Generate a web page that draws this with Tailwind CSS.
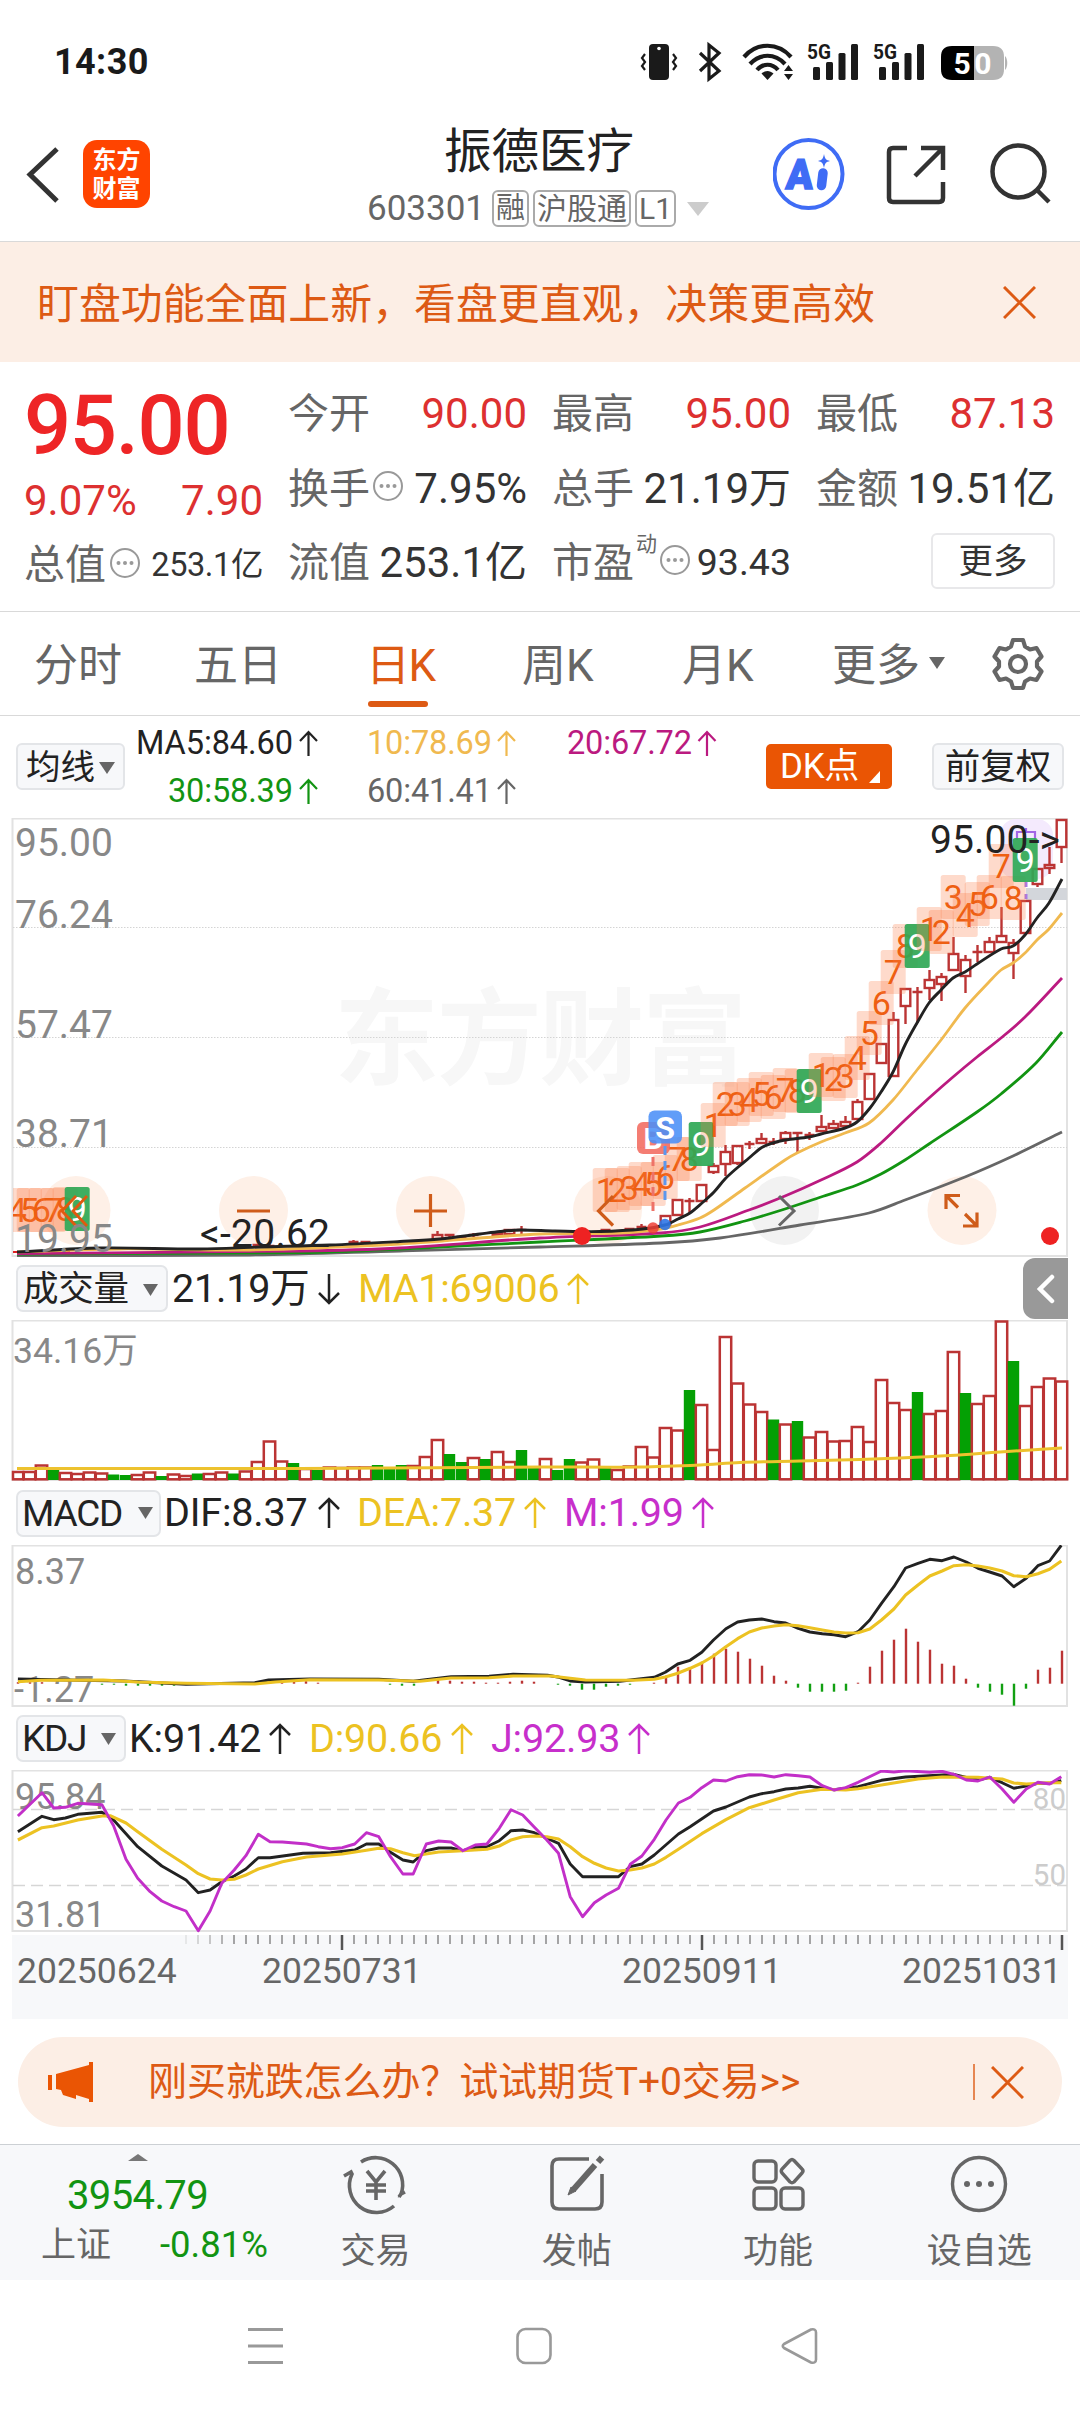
<!DOCTYPE html>
<html lang="zh-CN">
<head>
<meta charset="utf-8">
<title>振德医疗 603301</title>
<script src="https://cdn.jsdelivr.net/npm/@tailwindcss/browser@4"></script>
</head>
<body class="bg-white">
<div class="flex h-[2412px] w-[1080px] flex-col overflow-hidden bg-white font-['Roboto','Noto_Sans_CJK_SC',sans-serif] leading-none whitespace-nowrap text-[#222]">

  <!-- status bar -->
  <div class="flex h-[122px] items-center justify-between pr-[60px] pl-[54px]">
    <span class="pt-[2px] text-[36px] font-bold tracking-[0.4px] text-[#1a1a1a]">14:30</span>
    <svg class="h-[50px] w-[390px]" viewBox="630 36 390 50" fill="none" stroke="#1a1a1a">
      <rect x="649" y="44" width="20" height="36" rx="4" fill="#1a1a1a" stroke="none"/><circle cx="659" cy="48.500" r="1.800" fill="#fff" stroke="none"/>
      <path d="M645 54l-3 4 3 4-3 4 3 4M673 54l3 4-3 4 3 4-3 4" stroke-width="2.200"/>
      <path d="M700 53l19 18-10 8V45l10 8-19 18" stroke-width="3.200"/>
      <path d="M744 57c13-15 34-15 47 0M750 64c10-11 25-11 35 0M757 70c6-7 15-7 21 0" stroke-width="4.200"/>
      <path d="M767.500 80l-6-6.500c4-3.500 8-3.500 12 0z" fill="#1a1a1a" stroke="none"/>
      <path d="M784 71l4.500-6 4.500 6zM784 74l4.500 6 4.500-6z" fill="#1a1a1a" stroke="none"/>
      <g fill="#1a1a1a" stroke="none">
        <rect x="813" y="67" width="7" height="13" rx="1.500"/><rect x="826" y="62" width="7" height="18" rx="1.500"/><rect x="838.500" y="53" width="7" height="27" rx="1.500"/><rect x="851" y="44" width="7" height="36" rx="1.500"/>
        <rect x="879" y="67" width="7" height="13" rx="1.500"/><rect x="892" y="62" width="7" height="18" rx="1.500"/><rect x="904.500" y="53" width="7" height="27" rx="1.500"/><rect x="917" y="44" width="7" height="36" rx="1.500"/>
        <text x="807" y="58.500" font-size="20.500" font-weight="700" textLength="24" lengthAdjust="spacingAndGlyphs">5G</text>
        <text x="873" y="58.500" font-size="20.500" font-weight="700" textLength="24" lengthAdjust="spacingAndGlyphs">5G</text>
        <path d="M1005 56c3 3 3 11 0 14z" fill="#b3b3b3"/>
        <path d="M974 46h19c8 0 11 4 11 11v12c0 7-3 11-11 11h-19z" fill="#b3b3b3"/>
        <path d="M974 46h-22c-8 0-11 4-11 11v12c0 7 3 11 11 11h22z" fill="#000"/>
        <text x="953.500" y="74" font-size="30" font-weight="700" fill="#fff" textLength="38">50</text>
      </g>
    </svg>
  </div>

  <!-- header -->
  <div class="grid h-[120px] grid-cols-[367px_1fr_307px] border-b border-[#d9d9d9]">
    <div class="flex gap-[24px] pt-[18px] pl-[26px]">
      <svg class="mt-[7px] h-[56px] w-[33px]" viewBox="0 0 33 56" fill="none" stroke="#333" stroke-width="5"><path d="M31 2L4 27.500 31 54"/></svg>
      <div class="flex h-[68px] w-[67px] flex-col items-center justify-center gap-[5px] rounded-[14px] bg-[#ff4400] text-[24px] font-bold text-white"><span>东方</span><span>财富</span></div>
    </div>
    <div class="flex flex-col">
      <div class="flex h-[62px] items-center pl-[77px] text-[47.5px]">振德医疗</div>
      <div class="mt-[6px] flex h-[37px] items-center text-[#666]">
        <span class="w-[125px] text-[35px]">603301</span>
        <span class="mr-[4px] flex h-[37px] w-[37px] items-center justify-center rounded-[6px] border-2 border-[#aaa] text-[29px]">融</span>
        <span class="mr-[4px] flex h-[37px] w-[98px] items-center justify-center rounded-[6px] border-2 border-[#aaa] text-[30px]">沪股通</span>
        <span class="flex h-[37px] w-[41px] items-center justify-center rounded-[6px] border-2 border-[#aaa] text-[30px]">L1</span>
        <svg class="ml-[11px] h-[14px] w-[22px]" viewBox="0 0 22 14"><path d="M0 0h22L11 14z" fill="#ccc"/></svg>
      </div>
    </div>
    <svg class="h-[119px] w-[307px]" viewBox="773 122 307 119" fill="none" stroke="#333" stroke-width="4.500">
      <circle cx="808.500" cy="174" r="34" stroke="#3f6cf5" stroke-width="4"/>
      <text x="785.500" y="189" font-size="42" font-weight="900" fill="#3f6cf5" stroke="#3f6cf5" stroke-width="1.500" textLength="27" lengthAdjust="spacingAndGlyphs" transform="skewX(-4) translate(13 0)">A</text>
      <path d="M823 173l-1.500 12.500" stroke="#3f6cf5" stroke-width="9.500" stroke-linecap="round"/>
      <path d="M824 154c1 5 2 6 6 7-4 1-5 2-6 7-1-5-2-6-6-7 4-1 5-2 6-7z" fill="#3f6cf5" stroke="none"/>
      <path d="M907 148h-14q-4 0-4 4v46q0 4 4 4h46q4 0 4-4v-16M921 148h22v22M943 148l-28 28"/>
      <circle cx="1018.500" cy="171.500" r="26"/><path d="M1036 189l13 13"/>
    </svg>
  </div>

  <!-- notice -->
  <div class="flex h-[120px] items-center justify-between bg-[#fceee5] pr-[44px] pl-[37px] text-[#dd5a14]">
    <span class="pt-[5px] text-[41.9px]">盯盘功能全面上新，看盘更直观，决策更高效</span>
    <svg class="h-[33px] w-[33px]" viewBox="0 0 33 33" stroke="#dd5a14" stroke-width="3"><path d="M1 1l31 31M32 1L1 32"/></svg>
  </div>

  <!-- quote -->
  <div class="grid h-[250px] grid-cols-[239px_239px_239px_239px] gap-x-[25px] border-b border-[#d9d9d9] pl-[24px] text-[42px] text-[#333]">
    <div class="flex flex-col text-[#ee2526]">
      <div class="mt-[22px] flex h-[82px] items-center text-[83px] font-medium tracking-[-1.3px]">95.00</div>
      <div class="mt-[14px] flex h-[42px] items-center justify-between text-[42px] text-[#dd3030]"><span>9.07%</span><span>7.90</span></div>
      <div class="mt-[22px] flex h-[42px] items-center text-[#333]"><span class="text-[41px] text-[#666]">总值</span>
        <svg class="mx-[3px] mb-[5px] h-[32px] w-[32px]" viewBox="0 0 32 32"><circle cx="16" cy="16" r="14" fill="none" stroke="#999" stroke-width="2"/><g fill="#999"><circle cx="9.500" cy="16" r="2"/><circle cx="16" cy="16" r="2"/><circle cx="22.500" cy="16" r="2"/></g></svg>
        <span class="ml-auto text-[32.5px] tracking-[-0.4px]">253.1亿</span></div>
    </div>
    <div class="flex flex-col pt-[31px]">
      <div class="flex h-[42px] items-center justify-between"><span class="text-[41px] text-[#666]">今开</span><span class="text-[#dd3030]">90.00</span></div>
      <div class="mt-[33px] flex h-[42px] items-center"><span class="text-[41px] text-[#666]">换手</span>
        <svg class="mx-[2px] mb-[6px] h-[32px] w-[32px]" viewBox="0 0 32 32"><circle cx="16" cy="16" r="14" fill="none" stroke="#999" stroke-width="2"/><g fill="#999"><circle cx="9.500" cy="16" r="2"/><circle cx="16" cy="16" r="2"/><circle cx="22.500" cy="16" r="2"/></g></svg>
        <span class="ml-auto">7.95%</span></div>
      <div class="mt-[32px] flex h-[42px] items-center justify-between"><span class="text-[41px] text-[#666]">流值</span><span>253.1亿</span></div>
    </div>
    <div class="flex flex-col pt-[31px]">
      <div class="flex h-[42px] items-center justify-between"><span class="text-[41px] text-[#666]">最高</span><span class="text-[#dd3030]">95.00</span></div>
      <div class="mt-[33px] flex h-[42px] items-center justify-between"><span class="text-[41px] text-[#666]">总手</span><span>21.19万</span></div>
      <div class="mt-[32px] flex h-[42px] items-center"><span class="text-[41px] text-[#666]">市盈</span><span class="mb-[38px] ml-[2px] text-[21px] text-[#666]">动</span>
        <svg class="mb-[6px] ml-[2px] h-[32px] w-[32px]" viewBox="0 0 32 32"><circle cx="16" cy="16" r="14" fill="none" stroke="#999" stroke-width="2"/><g fill="#999"><circle cx="9.500" cy="16" r="2"/><circle cx="16" cy="16" r="2"/><circle cx="22.500" cy="16" r="2"/></g></svg>
        <span class="ml-auto text-[37.5px]">93.43</span></div>
    </div>
    <div class="flex flex-col pt-[31px]">
      <div class="flex h-[42px] items-center justify-between"><span class="text-[41px] text-[#666]">最低</span><span class="text-[#dd3030]">87.13</span></div>
      <div class="mt-[33px] flex h-[42px] items-center justify-between"><span class="text-[41px] text-[#666]">金额</span><span>19.51亿</span></div>
      <div class="mt-[23px] ml-auto flex h-[56px] w-[124px] items-center justify-center rounded-[6px] border-2 border-[#e8e8ea] text-[34.5px]">更多</div>
    </div>
  </div>

  <!-- period tabs -->
  <div class="flex h-[104px] items-start border-b border-[#d9d9d9] pt-[32px] text-[44px] text-[#666]">
    <span class="w-[158px] pl-[34px]">分时</span>
    <span class="w-[156px] pl-[36px]">五日</span>
    <span class="flex w-[156px] flex-col pl-[52px] tracking-[-1.5px] text-[#dd5a14]">日K<i class="mt-[13px] ml-[2px] h-[6px] w-[60px] rounded-full bg-[#dd5a14]"></i></span>
    <span class="w-[156px] pl-[52px]">周K</span>
    <span class="w-[156px] pl-[56px]">月K</span>
    <span class="w-[147px] pl-[50px]">更多</span>
    <svg class="mt-[13px] h-[12px] w-[16px]" viewBox="0 0 16 12"><path d="M0 0h16L8 12z" fill="#666"/></svg>
    <svg class="-mt-[7px] ml-[46px] h-[54px] w-[54px]" viewBox="-27 -27 54 54" fill="none" stroke="#666" stroke-width="4.200" stroke-linejoin="round"><path d="M-5-24H5L7-17.500 12-14.500 18.500-16 23.500-7.500 19-2.500V2.500L23.500 7.500 18.500 16 12 14.500 7 17.500 5 24H-5L-7 17.500-12 14.500-18.500 16-23.500 7.500-19 2.500V-2.500L-23.500-7.500-18.500-16-12-14.500-7-17.500z"/><circle r="8"/></svg>
  </div>

  <!-- moving averages -->
  <div class="flex h-[102px] items-start pt-[27px] pl-[16px]">
    <div class="flex h-[47px] w-[109px] items-center gap-[4px] rounded-[6px] border-2 border-[#e3e5e8] bg-[#f7f8fa] pt-[2px] pl-[8px] text-[34.5px]">均线<svg class="h-[12px] w-[16px]" viewBox="0 0 16 12"><path d="M0 0h16L8 12z" fill="#666"/></svg></div>
    <svg class="-mt-[27px] h-[102px] w-[641px]" viewBox="125 716 641 102" font-size="32.500">
      <g fill="#222" stroke="#222"><text x="136" y="754" stroke="none" textLength="157">MA5:84.60</text><path d="M308.500 756v-24M300 741l8.500-9 8.500 9" fill="none" stroke-width="2.200"/></g>
      <g fill="#f0b94f" stroke="#f0b94f"><text x="367" y="754" stroke="none" textLength="125">10:78.69</text><path d="M506.500 756v-24M498 741l8.500-9 8.500 9" fill="none" stroke-width="2.200"/></g>
      <g fill="#bb1a80" stroke="#bb1a80"><text x="567" y="754" stroke="none" textLength="125">20:67.72</text><path d="M707 756v-24M698.500 741l8.500-9 8.500 9" fill="none" stroke-width="2.200"/></g>
      <g fill="#129412" stroke="#129412"><text x="168" y="802" stroke="none" textLength="125">30:58.39</text><path d="M308.500 804v-24M300 789l8.500-9 8.500 9" fill="none" stroke-width="2.200"/></g>
      <g fill="#666" stroke="#666"><text x="367" y="802" stroke="none" textLength="125">60:41.41</text><path d="M506.500 804v-24M498 789l8.500-9 8.500 9" fill="none" stroke-width="2.200"/></g>
    </svg>
    <div class="mt-px flex h-[45px] w-[126px] items-center rounded-[5px] bg-[#ea5504] pl-[14px] text-[35px] tracking-[-0.3px] text-white">DK点<svg class="mt-[20px] ml-[10px] h-[12px] w-[11px]" viewBox="0 0 11 12"><path d="M11 0v12H0z" fill="#fff"/></svg></div>
    <div class="ml-[40px] flex h-[47px] w-[132px] items-center justify-center rounded-[6px] border-2 border-[#e3e5e8] bg-[#f7f8fa] pt-[2px] text-[35.5px]">前复权</div>
  </div>

  <!-- price chart -->
  <svg id="price" class="h-[439px] w-[1080px] shrink-0" viewBox="0 818 1080 439" fill="none"></svg>

  <!-- volume -->
  <div class="flex h-[63px] items-center pl-[16px] text-[39.5px] tracking-[-0.2px]">
    <div class="flex h-[47px] w-[152px] items-center gap-[14px] rounded-[7px] border-2 border-[#e3e5e8] bg-[#f7f8fa] pt-[2px] pl-[5px] text-[35.5px]">成交量<svg class="h-[12px] w-[15px]" viewBox="0 0 15 12"><path d="M0 0h15L7.500 12z" fill="#666"/></svg></div>
    <span class="w-[150px] pl-[4px]">21.19万</span>
    <svg class="h-[32px] w-[22px]" viewBox="0 0 22 32" fill="none" stroke="#222" stroke-width="2.500"><path d="M11 1v29M1 20l10 10 10-10"/></svg>
    <span class="ml-[18px] w-[209px] text-[#ecc222]">MA1:69006</span>
    <svg class="h-[32px] w-[22px]" viewBox="0 0 22 32" fill="none" stroke="#ecc222" stroke-width="2.500"><path d="M11 31V2M1 12L11 2l10 10"/></svg>
    <div class="ml-auto mr-[12px] flex h-[61px] w-[45px] items-center justify-center rounded-l-[12px] bg-[#999]"><svg class="h-[30px] w-[18px]" viewBox="0 0 18 30" fill="none" stroke="#fff" stroke-width="4.500" stroke-linecap="round"><path d="M15 3L3 15l12 12"/></svg></div>
  </div>
  <svg id="volume" class="h-[161px] w-[1080px] shrink-0" viewBox="0 1320 1080 161" fill="none"></svg>

  <!-- MACD -->
  <div class="flex h-[64px] items-center pl-[16px] text-[39.5px] tracking-[-0.2px]">
    <div class="flex h-[47px] w-[145px] items-center gap-[16px] rounded-[7px] border-2 border-[#e3e5e8] bg-[#f7f8fa] pl-[4px] text-[37px] tracking-[-1.2px]">MACD<svg class="h-[12px] w-[15px]" viewBox="0 0 15 12"><path d="M0 0h15L7.500 12z" fill="#666"/></svg></div>
    <span class="w-[157px] pl-[3px]">DIF:8.37</span>
    <svg class="h-[32px] w-[22px]" viewBox="0 0 22 32" fill="none" stroke="#222" stroke-width="2.500"><path d="M11 31V2M1 12L11 2l10 10"/></svg>
    <span class="ml-[17px] w-[167px] text-[#ecc222]">DEA:7.37</span>
    <svg class="h-[32px] w-[22px]" viewBox="0 0 22 32" fill="none" stroke="#ecc222" stroke-width="2.500"><path d="M11 31V2M1 12L11 2l10 10"/></svg>
    <span class="ml-[18px] w-[128px] text-[#c72fcb]">M:1.99</span>
    <svg class="h-[32px] w-[22px]" viewBox="0 0 22 32" fill="none" stroke="#c72fcb" stroke-width="2.500"><path d="M11 31V2M1 12L11 2l10 10"/></svg>
  </div>
  <svg id="macd" class="h-[162px] w-[1080px] shrink-0" viewBox="0 1545 1080 162" fill="none"></svg>

  <!-- KDJ -->
  <div class="flex h-[63px] items-center pl-[16px] text-[39.5px] tracking-[-0.2px]">
    <div class="flex h-[47px] w-[110px] items-center gap-[15px] rounded-[7px] border-2 border-[#e3e5e8] bg-[#f7f8fa] pl-[4px] text-[37px] tracking-[-1.2px]">KDJ<svg class="h-[12px] w-[15px]" viewBox="0 0 15 12"><path d="M0 0h15L7.500 12z" fill="#666"/></svg></div>
    <span class="w-[143px] pl-[3px]">K:91.42</span>
    <svg class="h-[32px] w-[22px]" viewBox="0 0 22 32" fill="none" stroke="#222" stroke-width="2.500"><path d="M11 31V2M1 12L11 2l10 10"/></svg>
    <span class="ml-[18px] w-[142px] text-[#ecc222]">D:90.66</span>
    <svg class="h-[32px] w-[22px]" viewBox="0 0 22 32" fill="none" stroke="#ecc222" stroke-width="2.500"><path d="M11 31V2M1 12L11 2l10 10"/></svg>
    <span class="ml-[18px] w-[137px] text-[#c72fcb]">J:92.93</span>
    <svg class="h-[32px] w-[22px]" viewBox="0 0 22 32" fill="none" stroke="#c72fcb" stroke-width="2.500"><path d="M11 31V2M1 12L11 2l10 10"/></svg>
  </div>
  <svg id="kdj" class="h-[249px] w-[1080px] shrink-0" viewBox="0 1770 1080 249" fill="none"></svg>

  <!-- promo -->
  <div class="mx-[18px] mt-[18px] flex h-[90px] items-center rounded-full bg-[#fceee5] pl-[30px] text-[#dd5a14]">
    <svg class="h-[40px] w-[46px]" viewBox="0 0 46 40" fill="#ea5504"><path d="M0 13h4v15H0zM8 12L41 3V0h4v40h-4v-3l-13-4v4l-13-4-2-5-5-1z"/></svg>
    <span class="ml-[54px] pt-[1px] text-[39px] tracking-[-0.1px]">刚买就跌怎么办？试试期货T+0交易&gt;&gt;</span>
    <i class="ml-auto h-[36px] w-[2px] bg-[#dd5a14]/70"></i>
    <svg class="mr-[38px] ml-[16px] h-[33px] w-[33px]" viewBox="0 0 33 33" stroke="#dd5a14" stroke-width="3"><path d="M1 1l31 31M32 1L1 32"/></svg>
  </div>

  <!-- bottom bar -->
  <div class="mt-[17px] flex h-[136px] border-t border-[#ccd0d4] bg-[#f7f8fa] text-[35px] text-[#666]">
    <div class="flex w-[275px] flex-col items-center text-[#129412]">
      <svg class="mt-[9px] h-[7px] w-[20px]" viewBox="0 0 20 7"><path d="M0 7h20L10 0z" fill="#777"/></svg>
      <span class="mt-[15px] text-[40px] tracking-[-0.6px]">3954.79</span>
      <div class="mt-[10px] flex h-[38px] w-full items-center justify-between pr-[7px] pl-[41px]"><span class="text-[#666]">上证</span><span class="text-[36.5px]">-0.81%</span></div>
    </div>
    <div class="flex flex-1 flex-col items-center pt-[7px]">
      <svg class="h-[64px] w-[68px]" viewBox="-34 -32 68 64" fill="none" stroke="#666" stroke-width="3.600"><path d="M-15-22a27 27 0 0 1 40 32l4-2-4 2-2 3M-32-8l7-4 1 2a27 27 0 0 0 42 32M-9-13L0-2 9-13M-10 1h20M-10 7h20M0-2v18"/></svg><span class="mt-[18px]">交易</span></div>
    <div class="flex flex-1 flex-col items-center pt-[7px]">
      <svg class="h-[64px] w-[68px]" viewBox="-34 -32 68 64" fill="none" stroke="#666" stroke-width="3.600"><path d="M12-25h-30q-7 0-7 7v36q0 7 7 7h36q7 0 7-7v-28"/><path d="M18-19L-4 6" stroke-width="6"/><path d="M-6 3l5 4-8 4z" fill="#666" stroke-width="1"/><path d="M21-22l4-4.500" stroke-width="6"/></svg><span class="mt-[18px]">发帖</span></div>
    <div class="flex flex-1 flex-col items-center pt-[7px]">
      <svg class="h-[64px] w-[68px]" viewBox="-34 -32 68 64" fill="none" stroke="#666" stroke-width="3.400"><rect x="-24" y="-23" width="22" height="21" rx="4"/><rect x="-24" y="4" width="22" height="21" rx="4"/><rect x="3" y="4" width="22" height="21" rx="4"/><path d="M16-23.500l8 8.500q2 2 0 4l-8 9q-2 1.500-4 0l-8-9q-1.500-2 0-4l8-8.500q2-2 4 0z"/></svg><span class="mt-[18px]">功能</span></div>
    <div class="flex flex-1 flex-col items-center pt-[7px]">
      <svg class="h-[64px] w-[68px]" viewBox="-34 -32 68 64" fill="none" stroke="#666" stroke-width="3.400"><circle r="26.500"/><g fill="#666" stroke="none"><circle cx="-12" r="3"/><circle r="3"/><circle cx="12" r="3"/></g></svg><span class="mt-[18px]">设自选</span></div>
  </div>

  <!-- system navigation -->
  <div class="flex h-[131px] items-center pl-[248px]">
    <svg class="h-[38px] w-[36px]" viewBox="0 0 36 38" stroke="#999" stroke-width="3"><path d="M0 2.500h35M0 19h35M0 35.500h35"/></svg>
    <svg class="ml-[232px] h-[38px] w-[36px]" viewBox="0 0 36 38" fill="none" stroke="#999" stroke-width="2.600"><rect x="1.500" y="2" width="33" height="34" rx="8"/></svg>
    <svg class="ml-[229px] h-[38px] w-[38px]" viewBox="0 0 38 38" fill="none" stroke="#999" stroke-width="2.600" stroke-linejoin="round"><path d="M3 17L30 2.500q5-1 5 3v27q0 4-5 3L3 21q-2.500-2 0-4z"/></svg>
  </div>
</div>

<script>
const NS = 'http://www.w3.org/2000/svg';
const $ = id => document.getElementById(id);
function el(p, tag, attrs, text) {
  const e = document.createElementNS(NS, tag);
  for (const k in attrs) e.setAttribute(k, attrs[k]);
  if (text !== undefined) e.textContent = text;
  p.appendChild(e);
  return e;
}
const X = i => 18 + 12 * i;
const line = (p, x1, y1, x2, y2, stroke, w, extra) => el(p, 'line', Object.assign({x1, y1, x2, y2, stroke, 'stroke-width': w}, extra || {}));
const text = (p, x, y, s, size, fill, extra) => el(p, 'text', Object.assign({x, y, 'font-size': size, fill}, extra || {}), s);
const frame = (p, y1, y2) => el(p, 'rect', {x: 12.5, y: y1 + .5, width: 1054.5, height: y2 - y1, stroke: '#e2e2e2', 'stroke-width': 2});
function curve(p, str, stroke, w, kx, ky, oy) {
  const pts = str.trim().split(/\s+/).map(s => { const [a, b] = s.split(',').map(Number); return (a / kx).toFixed(1) + ',' + (oy + b / ky).toFixed(1); });
  return el(p, 'polyline', {points: pts.join(' '), stroke, 'stroke-width': w, 'stroke-linejoin': 'round'});
}
function smooth(p, str, stroke, w) {
  const q = str.trim().split(/\s+/).map(s => s.split(',').map(Number));
  let d = 'M' + q[0];
  for (let i = 0; i < q.length - 1; i++) {
    const a = q[Math.max(i - 1, 0)], b = q[i], c = q[i + 1], e = q[Math.min(i + 2, q.length - 1)];
    const h = (c[0] - b[0]) / 3;
    const m1 = i ? (c[1] - a[1]) / (c[0] - a[0]) : (c[1] - b[1]) / (c[0] - b[0]);
    const m2 = e !== c ? (e[1] - b[1]) / (e[0] - b[0]) : (c[1] - b[1]) / (c[0] - b[0]);
    d += `C${b[0] + h},${b[1] + m1 * h} ${c[0] - h},${c[1] - m2 * h} ${c[0]},${c[1]}`;
  }
  return el(p, 'path', {d, stroke, 'stroke-width': w});
}

/* ---------- price ---------- */
const P = $('price');
text(P, 334, 1076, '东方财富', 105, '#f7f7f7', {'font-weight': 700, textLength: 413});
frame(P, 818, 1255.500);
[927.500, 1037.500, 1147.500].forEach(y => line(P, 13, y, 1067, y, '#d4d4d4', 1, {'stroke-dasharray': '1.500 1.500'}));
el(P, 'rect', {x: 1000, y: 819, width: 53, height: 60, rx: 16, fill: '#f4eafd'});
el(P, 'rect', {x: 1026, y: 888, width: 41, height: 12, fill: '#d3d6db'});
[[76, '#fef0e7'], [253.500, '#fef0e7'], [430.500, '#fef0e7'], [607.500, '#fef0e7'], [784.500, '#f2f2f2'], [962, '#fef0e7']].forEach(c => el(P, 'circle', {cx: c[0], cy: 1210.500, r: 34.500, fill: c[1]}));

/* candles counted back from the last session: [k, body top, body bottom, wick top, wick bottom]; equal body values draw a cross */
[[0,819,847,819,863],[1,864,868,847,874],[2,868,884,868,887],[3,900,933,900,933],[4,942,953,939,979],[5,935,942,907,942],[6,941,952,937,952],[7,952,952,945,962],[8,959,976,955,993],[9,953,970,937,970],[10,976,984,973,1001],[11,979,988,970,1000],[12,992,992,987,1023],[13,988,1006,988,1024],[14,1019,1076,1012,1076],[15,1043,1063,1043,1063],[16,1073,1099,1073,1099],[17,1101,1119,1099,1119],[18,1121,1126,1116,1127],[19,1123,1128,1120,1129],[20,1126,1131,1115,1131],[21,1135,1135,1132,1140],[22,1133,1133,1132,1153],[23,1132,1139,1131,1144],[24,1142,1142,1138,1145],[25,1138,1143,1133,1144],[26,1144,1144,1141,1149],[27,1145,1163,1145,1165],[28,1151,1164,1145,1176],[29,1165,1172,1163,1174],[30,1184,1201,1184,1201],[31,1201,1201,1198,1213],[32,1199,1215,1199,1215],[33,1215,1225,1215,1225],[35,1227,1227,1224,1230],[36,1229,1229,1228,1230],[38,1230,1230,1229,1231],[45,1230,1230,1226,1234],[46,1229,1234,1229,1234],[47,1232,1235,1232,1235],[49,1235,1235,1233,1237],[50,1237,1237,1235,1239],[51,1235,1235,1234,1239],[52,1234,1239,1231,1239],[53,1241,1241,1240,1243],[58,1242,1242,1241,1244],[59,1242,1242,1240,1244],[66,1246,1246,1244,1248],[67,1245,1245,1244,1247]].forEach(([k, t, b, wt, wb]) => {
  const x = 1061.5 - 12 * k, c = '#bb3434';
  if (t === b) { line(P, x - 5, t, x + 5, t, c, 2.500); line(P, x, wt, x, wb, c, 2.400); return; }
  if (wt < t) line(P, x, wt, x, t, c, 2.400);
  if (wb > b) line(P, x, b, x, wb, c, 2.400);
  el(P, 'rect', {x: x - 4.800, y: t + 1, width: 9.600, height: Math.max(b - t - 1, 2), stroke: c, 'stroke-width': 2.400});
});
line(P, 13, 1252, 70, 1252, '#d22', 2);
smooth(P, '17,1256 250,1255 400,1251 540,1247 661,1243 720,1238 800,1225 869,1213 905,1200 965,1177 1013,1156 1062,1132', '#666', 2.800);
smooth(P, '17,1254 300,1252.500 400,1249 540,1242 661,1236 700,1232 745,1221 785,1209 821,1197 857,1185 881,1174 905,1160 929,1144 977,1112 1001,1094 1036,1063 1062,1032', '#129412', 2.800);
smooth(P, '17,1253.500 300,1251 400,1248 540,1238 661,1233 700,1227 749,1210 785,1196 821,1180 857,1162 881,1143 905,1120 929,1098 953,1077 977,1057 1001,1038 1025,1017 1062,978', '#bb1a80', 2.800);
smooth(P, '17,1252 120,1249 250,1250 400,1244 480,1238 540,1234 620,1233 661,1229 678,1225 700,1218 714,1210 745,1188 785,1160 797,1153 821,1142 845,1133 869,1123 893,1100 917,1070 941,1040 965,1008 989,982 1001,970 1013,963 1025,953 1037,940 1049,929 1062,913', '#f0b94f', 2.800);
smooth(P, '17,1252 100,1248 200,1249 260,1247 330,1245 400,1241.500 440,1239 480,1234 500,1231.500 520,1230 555,1231 600,1231.500 643,1229 665,1225 678,1219 690,1213 702,1203 714,1192 725,1179 737,1168 749,1158 761,1148 773,1143 785,1140 809,1137 821,1134 845,1128 857,1122 870,1108 881,1092 893,1072 905,1045 917,1023 929,1003 941,990 953,978 965,972 977,964 1001,949 1013,946 1025,935 1037,918 1049,903 1062,879', '#222', 2.900);

line(P, 1026, 882, 1026, 900, '#a879e8', 3, {'stroke-dasharray': '5 7'});
el(P, 'path', {d: 'M1017 840v-8h18v8M1026 828v4', stroke: '#a366e6', 'stroke-width': 2.200});

/* nine-turn counters: [k, digit, box top] */
const clip = el(P, 'clipPath', {id: 'plot'});
el(clip, 'rect', {x: 13, y: 818, width: 1055, height: 438});
const T = el(P, 'g', {'clip-path': 'url(#plot)'});
[[87,4,1188],[86,5,1188],[85,6,1188],[84,7,1188],[83,8,1187],[82,9,1187],
 [38,1,1168],[37,2,1168],[36,3,1166],[35,4,1162],[34,5,1162],[33,6,1155],[32,7,1137],[31,8,1137],[30,9,1122],
 [29,1,1103],[28,2,1082],[27,3,1082],[26,4,1078],[25,5,1072],[24,6,1075],[23,7,1068],[22,8,1069],[21,9,1069],
 [20,1,1053],[19,2,1057],[18,3,1054],[17,4,1036],[16,5,1011],[15,6,981],[14,7,950],[13,8,924],[12,9,924],
 [11,1,907],[10,2,910],[9,3,875],[8,4,893],[7,5,882],[6,6,875],[5,7,844],[4,8,876],[3,9,838]].forEach(([k, n, y]) => {
  const x = 1061.2 - 12 * k, nine = n === 9;
  el(T, 'rect', {x: x - 12.500, y, width: 25, height: 44, rx: 2.500, fill: nine ? '#2fa856' : '#fb7a45', 'fill-opacity': nine ? .92 : .28});
  text(T, x, y + 34, n, 34, nine ? '#fff' : '#ee5f12', {'text-anchor': 'middle'});
});

/* trade markers */
el(P, 'rect', {x: 637, y: 1122, width: 33, height: 32, rx: 6, fill: '#f2665a', 'fill-opacity': .85});
text(P, 653, 1148.500, 'B', 30, '#fff', {'font-weight': 700, 'text-anchor': 'middle'});
el(P, 'rect', {x: 648.500, y: 1110.500, width: 33.500, height: 33, rx: 6, fill: '#4a8ff7', 'fill-opacity': .87});
text(P, 665, 1138.500, 'S', 32, '#fff', {'font-weight': 700, 'text-anchor': 'middle'});
line(P, 653, 1157, 653, 1213, '#ee7268', 3, {'stroke-dasharray': '9 6'});
line(P, 665, 1146, 665, 1202, '#5c97ee', 3, {'stroke-dasharray': '9 6'});
el(P, 'circle', {cx: 653, cy: 1228, r: 5.800, fill: '#ee4136', 'fill-opacity': .85});
el(P, 'circle', {cx: 665, cy: 1224.500, r: 5.800, fill: '#2f76e6', 'fill-opacity': .9});
el(P, 'circle', {cx: 582, cy: 1236, r: 9, fill: '#ee2222'});
el(P, 'circle', {cx: 1050, cy: 1236, r: 9, fill: '#ee2222'});

/* chart controls */
el(P, 'path', {d: 'M75 1213l-14 0', stroke: 'none'});
el(P, 'path', {d: 'M76 1196l-14 15 14 15M87 1196l-14 15 14 15', stroke: '#e0590f', 'stroke-width': 2.800});
el(P, 'path', {d: 'M237 1211h33M414 1211h33M430.500 1194v33M613 1196l-14.500 15 14.500 14.500M946 1209v-13.500h14M947 1196.500l11 11M977 1212.500V1226h-14M976 1225l-11-11', stroke: '#cf5c1a', 'stroke-width': 3.200});
el(P, 'path', {d: 'M779 1196l15 15-15 14.500', stroke: '#666', 'stroke-width': 3});

[['95.00', 855.500], ['76.24', 927.500], ['57.47', 1037.500], ['38.71', 1147], ['19.95', 1252]].forEach(a => text(P, 15, a[1], a[0], 39, '#888'));
text(P, 200, 1247, '<-20.62', 39, '#222', {textLength: 130});
text(P, 930, 853, '95.00->', 39, '#222', {textLength: 130});

/* ---------- volume ---------- */
const V = $('volume');
frame(V, 1320, 1479.500);
text(V, 13, 1363, '34.16万', 35.500, '#888');
const vol = [9,9,15.5,11.5,8,7,8.5,7.5,5.5,5,6,8.5,4,6.5,5,6.5,7,8.5,6.5,9.5,19,39.5,19.5,17,12,10,13.5,13,13.5,13.5,15,11.5,15,15,24,41,26,18,23,21,29,19,30,14,22,10,21,18.5,21.5,13.5,11,14.5,34,23.5,53,50.5,90,76,31,144,97.5,76.5,69,60.5,56.5,59,43.5,49,39.5,40,54,39,101,78,71,88,67,70,129,87,77,85,159.5,119,75,94,102.5,99.5];
const down = new Set([3,8,9,12,15,18,23,25,30,31,32,36,37,39,42,43,45,46,49,56,63,65,75,79,83]);
vol.forEach((h, i) => {
  const x = Math.max(X(i) - 6.2, 13), w = X(i) + 5.2 - x;
  if (down.has(i)) el(V, 'rect', {x, y: 1480 - h, width: w, height: h, fill: '#04a004'});
  else el(V, 'rect', {x, y: 1481 - h, width: w, height: h - 1.700, stroke: '#bb3434', 'stroke-width': 2.500});
});
smooth(V, '17,1468.500 300,1468.500 540,1467 640,1467 700,1465 740,1462.500 800,1461 860,1459.500 900,1458 950,1455.500 1000,1452 1062,1448', '#edc22e', 3);

/* ---------- MACD ---------- */
const M = $('macd');
frame(M, 1545, 1705.500);
text(M, 15, 1583.500, '8.37', 36, '#888');
text(M, 14, 1702, '-1.27', 36, '#888');
const hist = [1.5,1.5,1.5,0,0,0,0,-1,-1,-2,-2,-2,-2,-2,-1,-1,-1,-1,0,0,1,3,3.5,3,2.5,1,0,0,0,0,0,-1,-2,-2,0,4,3,2,2,1,1,2,3,2,0,-1,-2,-6,-6,-3,-2,-1,0,1,8,17,16,22,30,35,32,25,18,8,3,-4,-8,-8,-8,-7,1,17,33,44,55,42,34,20,18,5,-4,-8,-11,-22,-5,14,16,33];
hist.forEach((h, i) => { if (h) line(M, X(i), 1683.700, X(i), 1683.700 - h, h > 0 ? '#bb3434' : '#12a012', 2.400); });
curve(M, '26,597 95,600 180,603 270,613 370,608 390,600 450,597 550,598 600,604 655,590 710,589 745,583 795,586 812,592 828,603 850,606 900,604 950,592 966,577 984,552 1002,541 1019,517 1036,480 1054,446 1071,426 1088,420 1106,417 1124,425 1141,429 1159,445 1176,456 1194,461 1211,464 1228,470 1246,455 1263,420 1280,370 1298,320 1315,264 1333,250 1350,238 1368,242 1385,231 1403,246 1420,265 1437,276 1455,288 1472,320 1490,295 1507,257 1524,243 1541,196', '#222', 2.900, 1.452, 3, 1480);
curve(M, '26,605 60,601 150,600 200,606 270,610 370,612 400,606 450,599 550,600 610,604 655,594 710,593 745,588 800,588 828,595 850,600 920,601 950,598 966,591 984,580 1002,565 1019,549 1036,528 1054,500 1071,476 1088,456 1106,444 1124,438 1141,434 1159,437 1176,443 1194,450 1211,456 1228,459 1246,458 1263,447 1280,420 1298,387 1315,345 1333,315 1350,288 1368,273 1385,257 1403,254 1420,258 1437,264 1455,273 1472,287 1490,290 1507,281 1524,268 1541,243', '#ecc222', 3.100, 1.452, 3, 1480);

/* ---------- KDJ and date axis ---------- */
const K = $('kdj');
el(K, 'rect', {x: 12, y: 1935, width: 1056, height: 84, fill: '#f7f8fa'});
frame(K, 1770, 1930.500);
[1809.500, 1885.500].forEach(y => line(K, 13, y, 1067, y, '#d6d6d6', 1.500, {'stroke-dasharray': '12 6'}));
text(K, 15, 1809, '95.84', 36, '#888');
text(K, 15, 1926.500, '31.81', 36, '#888');
text(K, 1066, 1809, '80', 29.500, '#ccc', {'text-anchor': 'end'});
text(K, 1066, 1884.500, '50', 29.500, '#ccc', {'text-anchor': 'end'});
curve(K, '26,335 61,289 78,299 95,294 113,283 148,277 165,300 200,380 235,438 270,480 288,518 305,510 322,485 340,468 357,447 375,413 392,413 440,400 480,398 515,390 532,372 550,372 567,397 585,420 600,426 619,392 637,384 655,384 672,392 690,382 707,380 725,362 742,332 759,330 776,338 794,355 811,370 828,432 846,470 898,470 915,440 932,432 950,405 985,342 1002,320 1036,273 1054,261 1088,231 1106,221 1124,215 1141,207 1159,204 1176,199 1194,205 1211,209 1246,200 1280,181 1315,171 1368,165 1385,163 1403,172 1420,180 1437,172 1455,188 1472,205 1490,198 1507,190 1524,190 1541,182', '#222', 2.900, 1.452, 3, 1720);
curve(K, '26,360 61,323 78,318 113,300 148,288 160,287 183,309 200,335 235,388 270,435 288,461 305,477 322,480 340,478 357,465 375,447 410,425 445,411 497,402 532,391 550,385 567,386 585,398 602,407 637,396 672,392 707,388 725,378 742,360 759,350 776,348 794,350 811,357 828,380 846,410 863,430 880,444 898,453 915,450 932,444 950,432 967,412 985,388 1019,341 1054,299 1088,263 1124,240 1159,218 1194,208 1228,210 1246,206 1280,195 1333,177 1368,171 1420,172 1437,175 1455,177 1472,189 1490,192 1524,188 1541,188', '#ecc222', 3.100, 1.452, 3, 1720);
curve(K, '26,288 61,218 78,264 95,262 113,250 148,254 165,317 183,418 200,475 218,515 235,543 253,560 270,573 288,632 305,573 322,490 340,450 357,407 375,343 392,365 410,366 445,372 462,380 480,386 497,383 515,372 532,338 550,350 567,410 585,462 600,462 619,372 637,363 655,366 672,392 690,375 707,372 725,325 742,269 759,285 776,322 794,360 811,400 828,530 846,590 863,548 880,525 898,505 915,433 932,408 950,358 967,300 985,249 1002,232 1019,203 1036,180 1054,183 1071,170 1088,164 1106,165 1124,171 1141,164 1159,167 1176,171 1194,197 1211,210 1228,203 1246,187 1280,153 1298,156 1315,152 1350,157 1368,154 1385,163 1403,180 1420,183 1437,171 1455,207 1472,247 1490,207 1507,187 1524,192 1541,170', '#c22fc8', 2.900, 1.452, 3, 1720);
for (let i = 14; i <= 87; i++) {
  const major = i % 30 === 27;
  line(K, X(i), 1935, X(i), major ? 1950 : 1944, major ? '#555' : '#888', major ? 2.500 : 1.500, {opacity: i < 18 ? (i - 13) * .2 : 1});
}
[[17, '20250624'], [262, '20250731'], [622, '20250911'], [902, '20251031']].forEach(a => text(K, a[0], 1983, a[1], 35.500, '#666'));
</script>
</body>
</html>
